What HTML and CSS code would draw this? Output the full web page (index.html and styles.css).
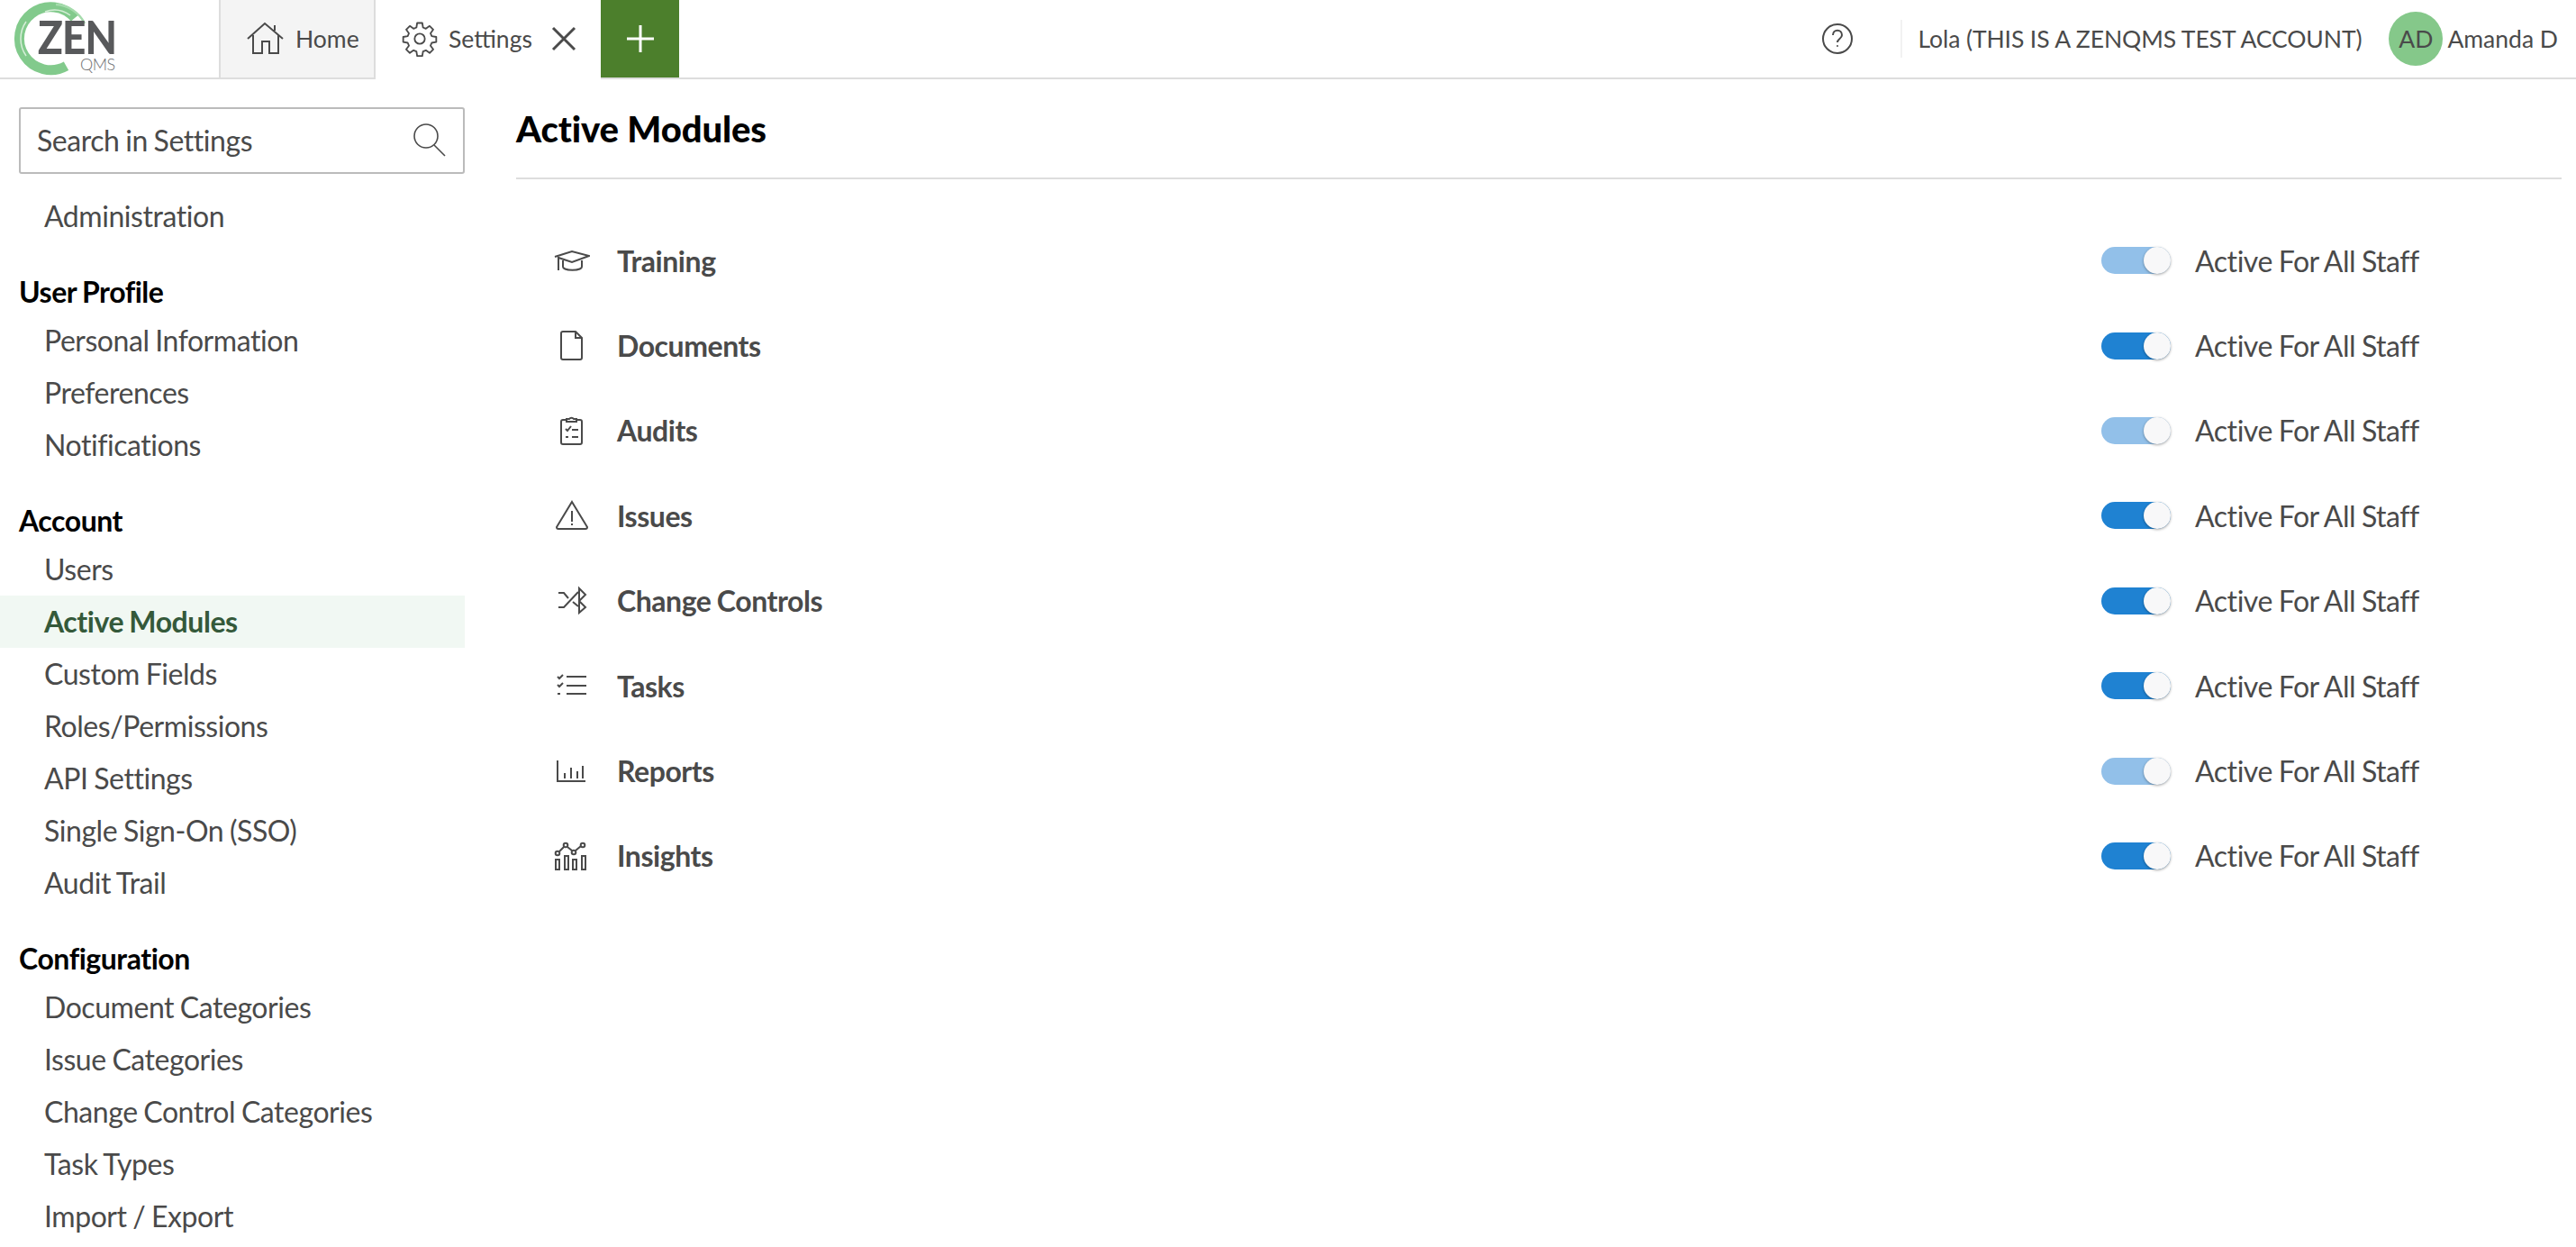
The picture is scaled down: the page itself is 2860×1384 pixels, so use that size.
FILE: index.html
```html
<!DOCTYPE html>
<html>
<head>
    <meta charset="utf-8">
    <meta name="viewport" content="width=device-width, initial-scale=1">
    <title>Active Modules</title>
    <link rel="stylesheet" href="styles.css">
</head>
<body>
<header class="topbar">
    <div class="logo">
        <svg class="logo-ring" width="110" height="86" viewBox="0 0 110 86" fill="none">
            <path d="M83 20 A35 35 0 1 0 73.5 73.3" stroke="#82ca8c" stroke-width="11"/>
            <path d="M78 9 A40 40 0 0 1 96 38" stroke="#82ca8c" stroke-width="0"/>
            <path d="M62 5 A38 38 0 0 1 94 26" stroke="#a5dbac" stroke-width="2.5"/>
            <path d="M29 24 A33 33 0 0 0 29 62" stroke="#d6eed8" stroke-width="1.5"/>
            <path d="M50 13 A30 30 0 0 1 78 17" stroke="#d6eed8" stroke-width="1.5"/>
        </svg>
        <span class="logo-zen">ZEN</span>
        <span class="logo-qms">QMS</span>
    </div>
    <div class="tab tab-home">
        <svg width="42" height="38" viewBox="0 0 42 38" fill="none" stroke="#4a4a4a" stroke-width="2">
            <path d="M1 19 L20 2 L40 19 M7 15 V35 H17 V22 H25 V35 H35 V15 M31 10 V4"/>
        </svg>
        <span>Home</span>
    </div>
    <div class="tab tab-settings">
        <svg width="40" height="40" viewBox="0 0 24 24" fill="none" stroke="#4a4a4a" stroke-width="1.1" stroke-linejoin="round">
            <circle cx="12" cy="12" r="3.4"/>
            <path d="M10.3 1.5h3.4l.5 3 1.9.8 2.5-1.8 2.4 2.4-1.8 2.5.8 1.9 3 .5v3.4l-3 .5-.8 1.9 1.8 2.5-2.4 2.4-2.5-1.8-1.9.8-.5 3h-3.4l-.5-3-1.9-.8-2.5 1.8-2.4-2.4 1.8-2.5-.8-1.9-3-.5v-3.4l3-.5.8-1.9-1.8-2.5 2.4-2.4 2.5 1.8 1.9-.8z"/>
        </svg>
        <span class="tab-label">Settings</span>
        <svg class="tab-close" width="28" height="28" viewBox="0 0 28 28" fill="none" stroke="#4a4a4a" stroke-width="3">
            <path d="M2 2 L26 26 M26 2 L2 26"/>
        </svg>
    </div>
    <div class="tab-add">
        <svg width="32" height="32" viewBox="0 0 32 32" fill="none" stroke="#fff" stroke-width="3">
            <path d="M16 1 V31 M1 16 H31"/>
        </svg>
    </div>
    <div class="topbar-right">
        <svg class="help" width="36" height="36" viewBox="0 0 36 36" fill="none" stroke="#4a4a4a" stroke-width="2">
            <circle cx="18" cy="18" r="16"/>
            <path d="M13 14 c0-7 10-7 10 0 c0 4-5 4-5 8"/>
            <circle cx="18" cy="26" r="1" fill="#4a4a4a" stroke="none"/>
        </svg>
        <div class="divider"></div>
        <span class="org">Lola (THIS IS A ZENQMS TEST ACCOUNT)</span>
        <span class="avatar">AD</span>
        <span class="username">Amanda D</span>
    </div>
</header>

<div class="layout">
    <aside class="sidebar">
        <div class="search">
            <span>Search in Settings</span>
            <svg width="38" height="38" viewBox="0 0 38 38" fill="none" stroke="#4a4a4a" stroke-width="1.6">
                <circle cx="15" cy="15" r="13"/>
                <path d="M24 25 L36 37"/>
            </svg>
        </div>
        <a class="nav-item">Administration</a>
        <h3 class="nav-heading">User Profile</h3>
        <a class="nav-item">Personal Information</a>
        <a class="nav-item">Preferences</a>
        <a class="nav-item">Notifications</a>
        <h3 class="nav-heading">Account</h3>
        <a class="nav-item">Users</a>
        <a class="nav-item active">Active Modules</a>
        <a class="nav-item">Custom Fields</a>
        <a class="nav-item">Roles/Permissions</a>
        <a class="nav-item">API Settings</a>
        <a class="nav-item">Single Sign-On (SSO)</a>
        <a class="nav-item">Audit Trail</a>
        <h3 class="nav-heading">Configuration</h3>
        <a class="nav-item">Document Categories</a>
        <a class="nav-item">Issue Categories</a>
        <a class="nav-item">Change Control Categories</a>
        <a class="nav-item">Task Types</a>
        <a class="nav-item">Import / Export</a>
    </aside>

    <main class="content">
        <h1 class="page-title">Active Modules</h1>
        <div class="modules">
            <div class="module">
                <svg class="module-icon" viewBox="0 0 40 40">
                    <path d="M1 16 L20 10 L39 15 L20 22 L5 17 V31 M10 20 V27 C10 32 31 32 31 27 V20"/>
                </svg>
                <span class="module-name">Training</span>
                <span class="switch dim"><i></i></span>
                <span class="module-status">Active For All Staff</span>
            </div>
            <div class="module">
                <svg class="module-icon" viewBox="0 0 40 40">
                    <path d="M10 4 H24 L31 11 V33 A2 2 0 0 1 29 35 H10 A2 2 0 0 1 8 33 V6 A2 2 0 0 1 10 4 Z M24 4 V11 H31"/>
                </svg>
                <span class="module-name">Documents</span>
                <span class="switch"><i></i></span>
                <span class="module-status">Active For All Staff</span>
            </div>
            <div class="module">
                <svg class="module-icon" viewBox="0 0 40 40">
                    <path d="M14 8 H10 A2 2 0 0 0 8 10 V33 A2 2 0 0 0 10 35 H29 A2 2 0 0 0 31 33 V10 A2 2 0 0 0 29 8 H25 M14 7 H17 A3 3 0 0 1 22 7 H25 V10 H14 Z M13 18 L15 20 L19 15 M20 19 H27 M20 27 H27 M13 27 H16"/>
                </svg>
                <span class="module-name">Audits</span>
                <span class="switch dim"><i></i></span>
                <span class="module-status">Active For All Staff</span>
            </div>
            <div class="module">
                <svg class="module-icon" viewBox="0 0 40 40">
                    <path d="M20 5 L37 33 Q37 35 35 35 H5 Q3 35 3 33 Z M20 15 V27 M20 29 V31"/>
                </svg>
                <span class="module-name">Issues</span>
                <span class="switch"><i></i></span>
                <span class="module-status">Active For All Staff</span>
            </div>
            <div class="module">
                <svg class="module-icon" viewBox="0 0 40 40">
                    <path d="M5 11 H11 L16 17 M5 27 H11 L27 10 M28 6 L35 13 L28 20 Z M21 21 L27 26 M28 20 L35 27 L28 33 Z"/>
                </svg>
                <span class="module-name">Change Controls</span>
                <span class="switch"><i></i></span>
                <span class="module-status">Active For All Staff</span>
            </div>
            <div class="module">
                <svg class="module-icon" viewBox="0 0 40 40">
                    <path d="M4 10 L6 12 L10 8 M4 19 L6 21 L10 17 M4 29 H7 M14 10 H36 M14 20 H36 M14 29 H36"/>
                </svg>
                <span class="module-name">Tasks</span>
                <span class="switch"><i></i></span>
                <span class="module-status">Active For All Staff</span>
            </div>
            <div class="module">
                <svg class="module-icon" viewBox="0 0 40 40">
                    <path d="M4 8 V31 H35 M12 22 V28 M19 16 V28 M26 20 V28 M32 14 V28"/>
                </svg>
                <span class="module-name">Reports</span>
                <span class="switch dim"><i></i></span>
                <span class="module-status">Active For All Staff</span>
            </div>
            <div class="module">
                <svg class="module-icon" viewBox="0 0 40 40">
                    <path d="M2 24 H6 V35 H2 Z M12 20 H16 V35 H12 Z M21 24 H25 V35 H21 Z M31 20 H35 V35 H31 Z M6 15 L11 10 M15 10 L20 14 M24 14 L30 9"/>
                    <circle cx="4" cy="17" r="2.3"/>
                    <circle cx="13" cy="8" r="2.3"/>
                    <circle cx="22" cy="16" r="2.3"/>
                    <circle cx="32" cy="8" r="2.3"/>
                </svg>
                <span class="module-name">Insights</span>
                <span class="switch"><i></i></span>
                <span class="module-status">Active For All Staff</span>
            </div>
        </div>
    </main>
</div>
</body>
</html>
```

FILE: styles.css
```css
*
{
  margin: 0;
  padding: 0;
  box-sizing: border-box;
}

body
{
  font-family: Lato, sans-serif;
  color: #4a4a4a;
  background: #fff;
  overflow: hidden;
  height: 1384px;
}

/* top bar */
.topbar
{
  display: flex;
  height: 88px;
  border-bottom: 2px solid #ddd;
  font-size: 26.5px;
}

.logo
{
  position: relative;
  width: 243px;
  flex: none;
}

.logo-ring
{
  position: absolute;
  left: 0;
  top: 0;
}

.logo-zen
{
  position: absolute;
  left: 42px;
  top: 20px;
  font-size: 51px;
  line-height: 42px;
  font-weight: 900;
  letter-spacing: -1px;
  color: #58595b;
  transform: scaleX(0.9);
  transform-origin: left;
}

.logo-qms
{
  position: absolute;
  left: 89px;
  top: 65px;
  font-size: 18px;
  line-height: 12px;
  font-weight: 300;
  letter-spacing: -0.5px;
  color: #6d6e70;
}

.tab
{
  display: flex;
  align-items: center;
  height: 88px;
  flex: none;
}

.tab-home
{
  width: 174px;
  padding-left: 29px;
  gap: 12px;
  background: #f4f4f4;
  border-left: 2px solid #ddd;
  border-right: 2px solid #ddd;
  border-bottom: 2px solid #ddd;
}

.tab-settings
{
  width: 250px;
  padding-left: 29px;
  padding-bottom: 2px;
  background: #fff;
}

.tab-label
{
  margin-left: 12px;
  height: 34px;
  line-height: 34px;
  overflow: hidden;
}

.tab-close
{
  margin-left: 21px;
}

.tab-add
{
  display: flex;
  align-items: center;
  justify-content: center;
  width: 87px;
  height: 86px;
  background: #4c7f2c;
}

.topbar-right
{
  display: flex;
  align-items: center;
  margin-left: auto;
  padding-right: 20px;
  height: 86px;
}

.divider
{
  width: 2px;
  height: 42px;
  margin: 0 18px 0 52px;
  background: #f2f2f2;
}

.org
{
  letter-spacing: -0.1px;
}

.avatar
{
  display: flex;
  align-items: center;
  justify-content: center;
  width: 60px;
  height: 60px;
  margin: 0 5px 0 30px;
  border-radius: 50%;
  background: #85c88a;
}

/* layout */
.layout
{
  display: flex;
}

.sidebar
{
  width: 516px;
  flex: none;
  padding-top: 31px;
  font-size: 32px;
  letter-spacing: -0.45px;
  word-spacing: -1px;
}

.search
{
  display: flex;
  align-items: center;
  justify-content: space-between;
  height: 74px;
  margin-left: 21px;
  padding: 0 18px 2px 18px;
  border: 2px solid #bbb;
  border-radius: 3px;
  margin-bottom: 18px;
}

.nav-item
{
  display: block;
  height: 58px;
  line-height: 58px;
  padding-left: 49px;
}

.nav-item.active
{
  background: #f1f8f3;
  color: #34593a;
  font-weight: 700;
}

.nav-heading
{
  height: 50px;
  line-height: 50px;
  margin-top: 30px;
  padding-left: 21px;
  font-size: 32px;
  font-weight: 700;
  color: #000;
}

.content
{
  flex: 1;
  margin-left: 57px;
  margin-right: 16px;
}

.page-title
{
  height: 111px;
  line-height: 110px;
  font-size: 40px;
  font-weight: 900;
  letter-spacing: -0.1px;
  color: #000;
  border-bottom: 2px solid #ddd;
}

.modules
{
  padding-top: 43px;
  padding-left: 42px;
}

.module
{
  display: flex;
  align-items: center;
  height: 94.4px;
  font-size: 32px;
  letter-spacing: -0.45px;
  word-spacing: -1px;
}

.module-icon
{
  width: 40px;
  height: 40px;
  flex: none;
  fill: none;
  stroke: #4a4a4a;
  stroke-width: 2;
}

.module-name
{
  margin-left: 30px;
  font-weight: 700;
}

.switch
{
  position: relative;
  width: 77px;
  height: 30px;
  margin-left: auto;
  border-radius: 15px;
  background: #1f82d2;
}

.switch.dim
{
  background: #92c0e9;
}

.switch i
{
  position: absolute;
  right: 0;
  top: 0;
  width: 30px;
  height: 30px;
  border-radius: 50%;
  background: #f8f8f9;
  box-shadow: 0 1px 3px rgba(0,0,0,0.35);
}

.module-status
{
  width: 407px;
  margin-left: 27px;
}
```
